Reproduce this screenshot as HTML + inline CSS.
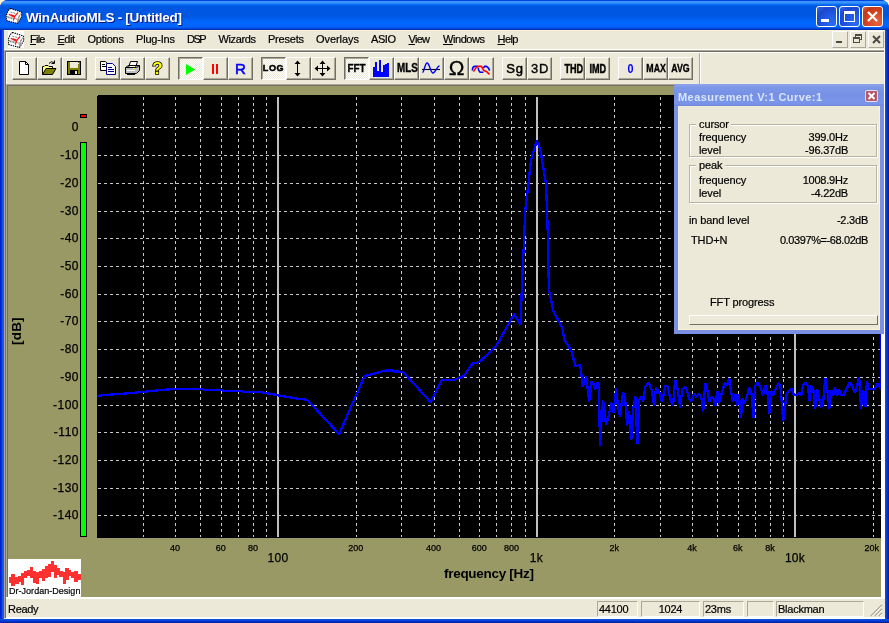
<!DOCTYPE html>
<html><head><meta charset="utf-8"><title>WinAudioMLS - [Untitled]</title>
<style>
html,body{margin:0;padding:0}
body{width:889px;height:623px;position:relative;overflow:hidden;background:#FBF3D3;font-family:"Liberation Sans",sans-serif;font-size:11px;color:#000}
.abs,.t{position:absolute}
.t{white-space:nowrap;line-height:1;transform-origin:0 0}
#win{will-change:transform;position:absolute;left:0;top:0;width:889px;height:623px;background:#0831D9;border-radius:8px 8px 0 0;overflow:hidden}
#title{position:absolute;left:0;top:0;width:889px;height:30px;background:linear-gradient(to bottom,#0045E0 0px,#0045E0 1px,#3A93FF 1.5px,#3A93FF 3px,#1078FB 4px,#0465EE 5px,#0058E2 6px,#0058E2 16px,#005CEB 18px,#0063F8 21px,#0066FF 23px,#0066FF 26px,#005CF0 27.5px,#0048D8 28.5px,#0030B5 29.5px,#0030B5 30px)}
#lb,#rb{position:absolute;top:30px;width:4px;height:593px}
#lb{left:0;background:linear-gradient(to right,#0019CF 0%,#0831D9 40%,#166AEE 75%,#0855DD 100%)}
#rb{left:885px;background:linear-gradient(to right,#0855DD 0%,#0A3FD8 30%,#001DA0 100%)}
#bb{position:absolute;left:0;top:619px;width:889px;height:4px;background:linear-gradient(to bottom,#0855DD 0%,#0A3FD8 40%,#001DA0 100%)}
#inner{position:absolute;left:4px;top:30px;width:881px;height:589px;background:#ECE9D8}
.tb{position:absolute;top:6px;width:21px;height:21px;border-radius:3px;box-sizing:border-box;border:1px solid #fff}
.tbb{background:radial-gradient(circle at 80% 85%,#2A6CF5 0%,#1E55E0 45%,#1B48CF 70%,#3468E6 100%)}
.tbc{background:radial-gradient(circle at 75% 80%,#E66540 0%,#D6431F 50%,#C03A18 75%,#E0694A 100%)}
.btn{position:absolute;top:57px;width:25px;height:23px;box-sizing:border-box;background:#ECE9D8;border-top:1px solid #fff;border-left:1px solid #fff;border-right:1px solid #716F64;border-bottom:1px solid #716F64;box-shadow:inset -1px -1px 0 #ACA899}
.btn.dn{border-top:1px solid #716F64;border-left:1px solid #716F64;border-right:1px solid #fff;border-bottom:1px solid #fff;box-shadow:inset 1px 1px 0 #ACA899;background:#ECE9D8 conic-gradient(#fff 25%,#ECE9D8 0 50%,#fff 0 75%,#ECE9D8 0) 0 0/2px 2px}
.btn svg{position:absolute;left:0;top:0}
.bt{position:absolute;left:0;top:0;width:23px;height:21px;text-align:center;line-height:21px;font-weight:bold;white-space:nowrap}
.mi,.mp,.sp{-webkit-text-stroke:0.2px #000}
.mi{position:absolute;top:33px;font-size:11px;line-height:13px;white-space:nowrap}
.mi u{text-decoration:underline;text-decoration-thickness:1px;text-underline-offset:1px}
.cb{position:absolute;top:31px;width:16px;height:17px;box-sizing:border-box;background:#ECE9D8;border-top:1px solid #fff;border-left:1px solid #fff;border-right:1px solid #ACA899;border-bottom:1px solid #ACA899}
.yl,.xs,.xb{-webkit-text-stroke:0.25px #000}
.yl{position:absolute;width:40px;text-align:right;font-size:12px;line-height:12px;letter-spacing:0.5px;white-space:nowrap}
.xs{position:absolute;width:40px;text-align:center;font-size:9px;line-height:10px;letter-spacing:0px;white-space:nowrap}
.xb{position:absolute;width:50px;text-align:center;font-size:12px;line-height:12px;letter-spacing:0.3px;white-space:nowrap}
.sp{position:absolute;top:601px;height:16px;box-sizing:border-box;border-top:1px solid #ACA899;border-left:1px solid #ACA899;border-right:1px solid #fff;border-bottom:1px solid #fff;font-size:11px;line-height:15px;white-space:nowrap;padding-left:1px;letter-spacing:-0.25px}
.mp{position:absolute;font-size:11px;line-height:11px;white-space:nowrap;letter-spacing:-0.12px}
.mr{letter-spacing:-0.22px}
.mr{text-align:right}
.gb{position:absolute;box-sizing:border-box;border:1px solid #B8B4A4;box-shadow:1px 1px 0 #fff,inset 1px 1px 0 #fff}
</style></head><body>
<div id="win">
<div id="title"></div><div id="lb"></div><div id="rb"></div><div id="bb"></div>
<div id="inner"></div><div class="abs" style="left:4px;top:30px;width:881px;height:1px;background:#FBF3D3"></div>

<svg class="abs" style="left:6px;top:8px" width="18" height="17" viewBox="0 0 18 17"><path d="M4.400 0.400 L15.500 4.100 L15.800 8.300 L11.500 15.500 L0.400 12.500 L0.300 7.300 L2.200 2.800 Z" fill="#fff" stroke="#000" stroke-width="1.1" stroke-dasharray="1.4 0.9"/><path d="M0.600 8.300 L11.300 11.300 L15.500 4.800 M11.300 11.300 L11.500 15" fill="none" stroke="#777" stroke-width=".7"/><path d="M4.400 4.100 L9.300 5.400 M1.500 9.600 L6.400 10.800 M13.300 7.500 L12.300 13" stroke="#666" stroke-width=".8" stroke-dasharray="2 1"/><path d="M2.800 6.400 L8.600 8.600 L7.300 12.500 M8.600 8.600 L12.100 4.300" fill="none" stroke="#FF1010" stroke-width="1.2"/><path d="M5 7.200 L8.600 8.600" stroke="#FF1010" stroke-width="1.8"/></svg>
<div class="t" id="ttl" style="left:26px;top:10.700px;font-size:13.5px;font-weight:bold;color:#fff;text-shadow:1px 1px 0 #0A1883;letter-spacing:-0.287px">WinAudioMLS - [Untitled]</div>
<div class="tb tbb" style="left:816px"><div class="abs" style="left:4px;top:12px;width:8px;height:3px;background:#fff"></div></div>
<div class="tb tbb" style="left:839px"><div class="abs" style="left:4px;top:4px;width:11px;height:11px;box-sizing:border-box;border:1px solid #fff;border-top:3px solid #fff"></div></div>
<div class="tb tbc" style="left:862px"><svg class="abs" style="left:3px;top:3px" width="13" height="13" viewBox="0 0 13 13"><path d="M2 2 L11 11 M11 2 L2 11" stroke="#fff" stroke-width="2.2"/></svg></div>
<div class="abs" style="left:8px;top:31px;width:16px;height:17px;background:#fff"></div>
<svg class="abs" style="left:8px;top:31.5px" width="18" height="17" viewBox="0 0 18 17"><path d="M4.400 0.400 L15.500 4.100 L15.800 8.300 L11.500 15.500 L0.400 12.500 L0.300 7.300 L2.200 2.800 Z" fill="#fff" stroke="#000" stroke-width="1.1" stroke-dasharray="1.4 0.9"/><path d="M0.600 8.300 L11.300 11.300 L15.500 4.800 M11.300 11.300 L11.500 15" fill="none" stroke="#777" stroke-width=".7"/><path d="M4.400 4.100 L9.300 5.400 M1.500 9.600 L6.400 10.800 M13.300 7.500 L12.300 13" stroke="#666" stroke-width=".8" stroke-dasharray="2 1"/><path d="M2.800 6.400 L8.600 8.600 L7.300 12.500 M8.600 8.600 L12.100 4.300" fill="none" stroke="#FF1010" stroke-width="1.2"/><path d="M5 7.200 L8.600 8.600" stroke="#FF1010" stroke-width="1.8"/></svg>
<div class="mi" id="m0" style="left:30px;letter-spacing:-0.750px"><u>F</u>ile</div>
<div class="mi" id="m1" style="left:57.5px;letter-spacing:-0.490px"><u>E</u>dit</div>
<div class="mi" id="m2" style="left:87.5px;letter-spacing:-0.237px">Options</div>
<div class="mi" id="m3" style="left:136px;letter-spacing:-0.194px">Plug-Ins</div>
<div class="mi" id="m4" style="left:187px;letter-spacing:-1.562px">DSP</div>
<div class="mi" id="m5" style="left:218.5px;letter-spacing:-0.372px">Wizards</div>
<div class="mi" id="m6" style="left:268px;letter-spacing:-0.216px">Presets</div>
<div class="mi" id="m7" style="left:316px;letter-spacing:-0.058px">Overlays</div>
<div class="mi" id="m8" style="left:371px;letter-spacing:-0.432px">ASIO</div>
<div class="mi" id="m9" style="left:408.5px;letter-spacing:-0.719px"><u>V</u>iew</div>
<div class="mi" id="m10" style="left:443px;letter-spacing:-0.440px"><u>W</u>indows</div>
<div class="mi" id="m11" style="left:497.5px;letter-spacing:-0.547px"><u>H</u>elp</div>
<div class="cb" style="left:832px"><div class="abs" style="left:3px;top:9px;width:6px;height:2px;background:#4D4B44"></div></div>
<div class="cb" style="left:850px"><div class="abs" style="left:4px;top:2px;width:7px;height:6px;box-sizing:border-box;border:1px solid #4D4B44;border-top:2px solid #4D4B44"></div><div class="abs" style="left:2px;top:5px;width:7px;height:6px;box-sizing:border-box;border:1px solid #4D4B44;border-top:2px solid #4D4B44;background:#ECE9D8"></div></div>
<div class="cb" style="left:868px"><svg class="abs" style="left:3px;top:3px" width="9" height="9" viewBox="0 0 9 9"><path d="M1 1 L8 8 M8 1 L1 8" stroke="#4D4B44" stroke-width="2"/></svg></div>
<div class="abs" style="left:4px;top:49px;width:881px;height:1px;background:#fff"></div>
<div class="abs" style="left:4px;top:50px;width:880px;height:1px;background:#ACA899"></div>
<div class="abs" style="left:5px;top:51px;width:879px;height:1px;background:#716F64"></div>
<div class="abs" style="left:6px;top:52px;width:878px;height:1px;background:#fff"></div>
<div class="abs" style="left:884px;top:50px;width:1px;height:569px;background:#fff"></div>
<div class="abs" style="left:4px;top:50px;width:1px;height:568px;background:#ACA899"></div>
<div class="abs" style="left:5px;top:51px;width:1px;height:567px;background:#716F64"></div>
<div class="abs" style="left:6px;top:52px;width:1px;height:33px;background:#fff"></div>
<div class="abs" style="left:699px;top:53px;width:1px;height:31px;background:#ACA899"></div>
<div class="abs" style="left:700px;top:53px;width:1px;height:31px;background:#fff"></div>
<div class="btn" style="left:12px"><svg width="23" height="21"><path d="M6.5 3.5 H12.5 L15.5 6.5 V16.5 H6.5 Z" fill="#fff" stroke="#000"/><path d="M12.5 3.5 V6.5 H15.5" fill="none" stroke="#000"/></svg></div>
<div class="btn" style="left:37px"><svg width="23" height="21"><path d="M4.5 16.5 V8.5 H6 L7 7.5 H10 L11 8.5 H14.5 V10.5" fill="#FFFF80" stroke="#000"/><path d="M4.5 16.5 L8 10.5 H18 L14.5 16.5 Z" fill="#808000" stroke="#000"/><path d="M11 5.5 Q13 2.5 16 4.5 M16.5 2.5 V5.5 H13.5" fill="none" stroke="#000"/></svg></div>
<div class="btn" style="left:62px"><svg width="23" height="21"><rect x="4.500" y="3.500" width="13" height="13" fill="#808000" stroke="#000"/><rect x="7" y="4" width="8" height="6" fill="#ECE9D8"/><rect x="7" y="12" width="8" height="4" fill="#000"/><rect x="12" y="13" width="2" height="3" fill="#ECE9D8"/><rect x="15" y="5" width="1" height="1" fill="#fff"/></svg></div>
<div class="btn" style="left:95px"><svg width="23" height="21"><path d="M4.500 3.500 H9.500 L11.500 5.500 V12.500 H4.500 Z" fill="#fff" stroke="#000"/><path d="M6 6.500 H9 M6 8.500 H10" stroke="#000"/><path d="M10.500 5.500 H16.500 L19.500 8.500 V16.500 H10.500 Z" fill="#fff" stroke="#000080"/><path d="M12 9.500 H16 M12 11.500 H18 M12 13.500 H18" stroke="#000080"/></svg></div>
<div class="btn" style="left:120px"><svg width="23" height="21"><path d="M7.500 9.500 L9.500 3.500 H16.500 L14.500 9.500" fill="#fff" stroke="#000"/><path d="M4.500 9.500 H15.500 L18.500 7.500 V12.500 L15.500 15.500 H4.500 Z" fill="#C0C0C0" stroke="#000"/><path d="M4.500 9.500 L7.500 7.500 H18.500" fill="none" stroke="#000"/><path d="M6 16.500 H14" stroke="#000"/><path d="M6 12.500 H14" stroke="#fff"/><rect x="12" y="10" width="2" height="1" fill="#FFFF00"/></svg></div>
<div class="btn" style="left:145px"><div class="bt" style="font-size:17px;color:#FFFF00;-webkit-text-stroke:1.6px #000;paint-order:stroke fill;line-height:21px">?</div></div>
<div class="btn dn" style="left:178px"><svg width="23" height="21"><path d="M7 6 L16.200 11.500 L7 17 Z" fill="#00FF00"/></svg></div>
<div class="btn" style="left:203px"><svg width="23" height="21"><rect x="8" y="6" width="2" height="10" fill="#FF0000"/><rect x="12" y="6" width="2" height="10" fill="#FF0000"/></svg></div>
<div class="btn" style="left:228px"><div class="bt" style="font-size:15px;color:#0000FF;font-weight:normal;-webkit-text-stroke:0.6px #0000FF">R</div></div>
<div class="btn dn" style="left:261px"><div class="bt" style="font-size:9px;letter-spacing:0.6px;-webkit-text-stroke:0.5px #000">LOG</div></div>
<div class="btn" style="left:286px"><svg width="23" height="21" shape-rendering="crispEdges"><rect x="10" y="4" width="1" height="13" fill="#000"/><path d="M10.500 2.500 L13.500 6 H7.500 Z M10.500 18.500 L13.500 15 H7.500 Z" fill="#000" shape-rendering="auto"/></svg></div>
<div class="btn" style="left:311px"><svg width="23" height="21" shape-rendering="crispEdges"><rect x="10" y="4" width="1" height="13" fill="#000"/><rect x="4" y="10" width="13" height="1" fill="#000"/><path d="M10.500 2.500 L13.500 6 H7.500 Z M10.500 18.500 L13.500 15 H7.500 Z M2.500 10.500 L6 7.500 V13.500 Z M18.500 10.500 L15 7.500 V13.500 Z" fill="#000" shape-rendering="auto"/></svg></div>
<div class="btn dn" style="left:344px"><div class="bt" style="font-size:11px;transform:scaleX(.9);-webkit-text-stroke:0.3px #000">FFT</div></div>
<div class="btn" style="left:369px"><svg width="23" height="21" shape-rendering="crispEdges"><path d="M3 18.500 V9 H5 V4 H7 V12.600 H9 V2 H11 V13.500 H13 V7.200 H15 V6 H17 V5 H19 V18.500 Z" fill="#0000FF"/></svg></div>
<div class="btn" style="left:394px"><div class="bt" style="font-size:12px;transform:scaleX(.82);-webkit-text-stroke:0.4px #000">MLS</div></div>
<div class="btn" style="left:419px"><svg width="23" height="21"><path d="M2 11.500 H20" stroke="#000" stroke-width="1.1"/><path d="M2.500 14.500 C4 14.500 5 5 7 5 C9.500 5 10.500 15 13 15 C15.500 15 16.500 9 19.500 7.700" fill="none" stroke="#0000FF" stroke-width="1.4"/></svg></div>
<div class="btn" style="left:444px"><div class="bt" style="font-size:21px;font-weight:normal;line-height:19px;-webkit-text-stroke:0.3px #000">Ω</div></div>
<div class="btn" style="left:469px"><svg width="23" height="21"><path d="M2.400 12.400 C2.400 10.500 3.300 8.400 5 8.400 H8" fill="none" stroke="#0000FF" stroke-width="1.6"/><path d="M8.200 9.700 L8.600 12.200 L10.100 14.300 H13.400" fill="none" stroke="#0000FF" stroke-width="1.5"/><path d="M13.400 10.100 L14.700 8.400 H16.400 L18.500 10.100 L19.700 12.600" fill="none" stroke="#0000FF" stroke-width="1.6"/><path d="M3.400 13.600 L6.300 9.300 L8.200 8.400 H11.400 L12.600 10.500 L13.900 12.600 L16.400 13.400 L19.500 16.400" fill="none" stroke="#FF0000" stroke-width="1.6"/></svg></div>
<div class="btn" style="left:502px"><div class="bt" style="font-size:13px;font-weight:normal;-webkit-text-stroke:0.5px #000;letter-spacing:0.8px;text-indent:1px">Sg</div></div>
<div class="btn" style="left:527px"><div class="bt" style="font-size:13px;font-weight:normal;-webkit-text-stroke:0.35px #000;letter-spacing:0.6px;text-indent:1px">3D</div></div>
<div class="btn" style="left:560px"><div class="bt" style="font-size:13px;transform:scaleX(.7);-webkit-text-stroke:0.5px #000">THD</div></div>
<div class="btn" style="left:585px"><div class="bt" style="font-size:13px;transform:scaleX(.7);-webkit-text-stroke:0.5px #000">IMD</div></div>
<div class="btn" style="left:618px"><div class="bt" style="font-size:13.5px;color:#0000FF;transform:scaleX(.8)">0</div></div>
<div class="btn" style="left:643px"><div class="bt" style="font-size:11px;transform:scaleX(.8);-webkit-text-stroke:0.35px #000">MAX</div></div>
<div class="btn" style="left:668px"><div class="bt" style="font-size:11px;transform:scaleX(.8);-webkit-text-stroke:0.35px #000">AVG</div></div>
<div class="abs" style="left:6px;top:84px;width:878px;height:1px;background:#ACA899"></div>
<div class="abs" style="left:6px;top:85px;width:875px;height:1px;background:#716F64"></div>
<div class="abs" style="left:6px;top:85px;width:1px;height:513px;background:#ACA899"></div>
<div class="abs" style="left:7px;top:85px;width:1px;height:513px;background:#716F64"></div>
<div class="abs" style="left:881px;top:85px;width:3px;height:513px;background:#fff"></div>
<div class="abs" id="olive" style="left:8px;top:86px;width:873px;height:511px;background:#999966"></div>
<svg class="abs" style="left:97px;top:95px" width="784" height="443" viewBox="97 95 784 443" shape-rendering="crispEdges">
<path d="M98 95 H881 V538 H97 V96 Z" fill="#000"/>
<path d="M98 127.5 H881" stroke="#C8C8C8" stroke-width="1" stroke-dasharray="3 3" fill="none"/>
<path d="M98 155.5 H881" stroke="#C8C8C8" stroke-width="1" stroke-dasharray="3 3" fill="none"/>
<path d="M98 183.5 H881" stroke="#C8C8C8" stroke-width="1" stroke-dasharray="3 3" fill="none"/>
<path d="M98 211.5 H881" stroke="#C8C8C8" stroke-width="1" stroke-dasharray="3 3" fill="none"/>
<path d="M98 238.5 H881" stroke="#C8C8C8" stroke-width="1" stroke-dasharray="3 3" fill="none"/>
<path d="M98 266.5 H881" stroke="#C8C8C8" stroke-width="1" stroke-dasharray="3 3" fill="none"/>
<path d="M98 294.5 H881" stroke="#C8C8C8" stroke-width="1" stroke-dasharray="3 3" fill="none"/>
<path d="M98 321.5 H881" stroke="#C8C8C8" stroke-width="1" stroke-dasharray="3 3" fill="none"/>
<path d="M98 349.5 H881" stroke="#C8C8C8" stroke-width="1" stroke-dasharray="3 3" fill="none"/>
<path d="M98 377.5 H881" stroke="#C8C8C8" stroke-width="1" stroke-dasharray="3 3" fill="none"/>
<path d="M98 405.5 H881" stroke="#C8C8C8" stroke-width="1" stroke-dasharray="3 3" fill="none"/>
<path d="M98 432.5 H881" stroke="#C8C8C8" stroke-width="1" stroke-dasharray="3 3" fill="none"/>
<path d="M98 460.5 H881" stroke="#C8C8C8" stroke-width="1" stroke-dasharray="3 3" fill="none"/>
<path d="M98 488.5 H881" stroke="#C8C8C8" stroke-width="1" stroke-dasharray="3 3" fill="none"/>
<path d="M98 515.5 H881" stroke="#C8C8C8" stroke-width="1" stroke-dasharray="3 3" fill="none"/>
<path d="M143.5 97 V537" stroke="#C8C8C8" stroke-width="1" stroke-dasharray="3 3" fill="none"/>
<path d="M175.5 97 V537" stroke="#C8C8C8" stroke-width="1" stroke-dasharray="3 3" fill="none"/>
<path d="M200.5 97 V537" stroke="#C8C8C8" stroke-width="1" stroke-dasharray="3 3" fill="none"/>
<path d="M221.5 97 V537" stroke="#C8C8C8" stroke-width="1" stroke-dasharray="3 3" fill="none"/>
<path d="M238.5 97 V537" stroke="#C8C8C8" stroke-width="1" stroke-dasharray="3 3" fill="none"/>
<path d="M253.5 97 V537" stroke="#C8C8C8" stroke-width="1" stroke-dasharray="3 3" fill="none"/>
<path d="M266.5 97 V537" stroke="#C8C8C8" stroke-width="1" stroke-dasharray="3 3" fill="none"/>
<path d="M356.5 97 V537" stroke="#C8C8C8" stroke-width="1" stroke-dasharray="3 3" fill="none"/>
<path d="M401.5 97 V537" stroke="#C8C8C8" stroke-width="1" stroke-dasharray="3 3" fill="none"/>
<path d="M434.5 97 V537" stroke="#C8C8C8" stroke-width="1" stroke-dasharray="3 3" fill="none"/>
<path d="M459.5 97 V537" stroke="#C8C8C8" stroke-width="1" stroke-dasharray="3 3" fill="none"/>
<path d="M479.5 97 V537" stroke="#C8C8C8" stroke-width="1" stroke-dasharray="3 3" fill="none"/>
<path d="M496.5 97 V537" stroke="#C8C8C8" stroke-width="1" stroke-dasharray="3 3" fill="none"/>
<path d="M511.5 97 V537" stroke="#C8C8C8" stroke-width="1" stroke-dasharray="3 3" fill="none"/>
<path d="M525.5 97 V537" stroke="#C8C8C8" stroke-width="1" stroke-dasharray="3 3" fill="none"/>
<path d="M614.5 97 V537" stroke="#C8C8C8" stroke-width="1" stroke-dasharray="3 3" fill="none"/>
<path d="M660.5 97 V537" stroke="#C8C8C8" stroke-width="1" stroke-dasharray="3 3" fill="none"/>
<path d="M692.5 97 V537" stroke="#C8C8C8" stroke-width="1" stroke-dasharray="3 3" fill="none"/>
<path d="M717.5 97 V537" stroke="#C8C8C8" stroke-width="1" stroke-dasharray="3 3" fill="none"/>
<path d="M738.5 97 V537" stroke="#C8C8C8" stroke-width="1" stroke-dasharray="3 3" fill="none"/>
<path d="M755.5 97 V537" stroke="#C8C8C8" stroke-width="1" stroke-dasharray="3 3" fill="none"/>
<path d="M770.5 97 V537" stroke="#C8C8C8" stroke-width="1" stroke-dasharray="3 3" fill="none"/>
<path d="M783.5 97 V537" stroke="#C8C8C8" stroke-width="1" stroke-dasharray="3 3" fill="none"/>
<path d="M873.5 97 V537" stroke="#C8C8C8" stroke-width="1" stroke-dasharray="3 3" fill="none"/>
<rect x="277" y="97" width="2" height="440" fill="#C0C0C0"/>
<rect x="536" y="97" width="2" height="440" fill="#C0C0C0"/>
<rect x="794" y="97" width="2" height="440" fill="#C0C0C0"/>
<path d="M97.0 395.8 L109.4 394.7 L119.5 394.0 L130.7 393.1 L142.0 392.0 L153.2 390.8 L163.4 389.9 L174.6 388.8 L202.7 388.8 L203.9 389.7 L221.9 389.9 L223.0 390.8 L242.1 391.1 L243.2 392.0 L261.2 392.2 L268.0 393.5 L278.1 395.3 L297.0 398.5 L307.1 399.8 L339.1 434.0 L364.5 376.2 L385.4 370.5 L392.8 370.5 L394.0 371.5 L403.0 371.8 L430.6 402.2 L442.1 379.7 L454.9 379.7 L463.7 375.9 L472.4 363.7 L479.2 362.1 L496.1 346.2 L514.3 313.9 L520.4 325.0 L521.3 303.0 L522.1 281.5 L523.0 260.0 L524.3 238.4 L525.0 213.0 L528.4 184.2 L531.0 160.1 L536.8 140.8 L538.7 144.4 L541.1 154.0 L546.0 184.2 L547.1 211.9 L547.9 237.2 L548.3 263.6 L549.0 290.2 L553.4 311.2 L562.2 328.0 L564.6 340.2 L571.2 350.6 L575.6 366.5 L579.5 364.7 L580.9 370.0 L582.7 386.8 L584.8 380.6 L586.2 376.2 L587.1 384.2 L589.2 401.8 L591.5 381.5 L593.3 383.3 L595.0 389.5 L597.7 382.4 L598.9 384.2 L600.0 446.0 L601.7 416.0 L603.0 400.0 L604.2 407.1 L606.0 424.8 L608.3 417.7 L611.3 402.7 L613.6 412.4 L616.2 388.6 L618.0 407.1 L620.1 416.9 L623.0 392.1 L625.1 398.3 L627.2 425.7 L629.0 410.7 L631.3 439.8 L633.0 410.7 L635.3 395.7 L637.4 444.2 L639.2 400.0 L641.3 396.5 L643.1 401.8 L645.4 386.8 L648.4 382.4 L651.6 389.5 L654.2 406.3 L656.0 387.7 L659.5 393.0 L662.0 402.0 L665.4 385.8 L667.4 385.8 L670.8 400.6 L673.1 405.3 L675.1 379.7 L676.9 385.1 L680.2 408.0 L682.3 389.1 L685.0 387.1 L687.0 390.5 L690.0 401.3 L691.7 400.6 L694.4 393.2 L696.2 397.2 L698.9 393.2 L701.2 396.6 L703.2 411.4 L705.2 383.1 L707.2 389.1 L709.3 402.0 L712.0 396.6 L714.0 399.3 L715.3 406.0 L717.4 391.2 L719.1 403.3 L721.4 394.5 L724.8 382.4 L727.1 385.8 L729.2 378.3 L730.9 390.5 L732.9 402.0 L735.6 394.5 L737.2 406.0 L738.9 394.5 L741.0 417.5 L742.6 397.9 L744.3 404.0 L747.0 396.6 L749.1 387.8 L751.5 393.2 L753.4 417.5 L755.1 385.8 L757.8 382.4 L759.9 385.8 L763.2 395.2 L765.3 385.1 L767.3 390.5 L769.3 413.4 L771.3 391.2 L773.1 395.9 L776.1 387.8 L778.8 383.0 L780.8 389.1 L783.2 421.4 L784.8 408.0 L786.8 393.1 L791.3 388.4 L793.6 394.5 L797.0 395.1 L799.9 392.5 L801.3 395.8 L803.0 385.0 L805.3 382.3 L808.0 386.4 L809.4 400.5 L811.1 385.7 L813.4 390.4 L815.1 409.3 L817.2 389.1 L819.2 398.5 L821.2 407.3 L823.2 401.2 L825.3 378.3 L827.3 389.1 L829.3 408.6 L831.3 389.8 L833.1 395.8 L835.0 387.1 L837.0 395.8 L839.0 389.1 L841.4 395.1 L843.5 395.1 L849.5 383.0 L851.5 385.0 L855.2 392.5 L859.2 377.6 L861.0 408.6 L863.0 389.8 L864.3 394.5 L865.4 406.6 L867.0 381.0 L868.4 388.5 L874.4 389.5 L877.3 383.5 L879.7 386.8 L881.1 390.0 L881.1 95.0" fill="none" stroke="#0000FF" stroke-width="2.3" stroke-linejoin="bevel" shape-rendering="crispEdges"/>
</svg>
<div class="yl" style="left:39px;top:121px">0</div>
<div class="yl" style="left:39px;top:149px">-10</div>
<div class="yl" style="left:39px;top:177px">-20</div>
<div class="yl" style="left:39px;top:205px">-30</div>
<div class="yl" style="left:39px;top:232px">-40</div>
<div class="yl" style="left:39px;top:260px">-50</div>
<div class="yl" style="left:39px;top:288px">-60</div>
<div class="yl" style="left:39px;top:315px">-70</div>
<div class="yl" style="left:39px;top:343px">-80</div>
<div class="yl" style="left:39px;top:371px">-90</div>
<div class="yl" style="left:39px;top:399px">-100</div>
<div class="yl" style="left:39px;top:426px">-110</div>
<div class="yl" style="left:39px;top:454px">-120</div>
<div class="yl" style="left:39px;top:482px">-130</div>
<div class="yl" style="left:39px;top:509px">-140</div>
<div class="t" id="dbl" style="left:10px;top:345px;font-size:13.5px;font-weight:bold;transform:rotate(-90deg);transform-origin:0 0;letter-spacing:0.2px">[dB]</div>
<div class="abs" style="left:80px;top:114px;width:7px;height:4px;box-sizing:border-box;border:1px solid #000;background:#FF0000"></div>
<div class="abs" style="left:80px;top:142px;width:7px;height:395px;box-sizing:border-box;border:1px solid #000;background:#00FF00"></div>
<div class="xs" style="left:155.1px;top:542.500px">40</div>
<div class="xs" style="left:200.7px;top:542.500px">60</div>
<div class="xs" style="left:232.9px;top:542.500px">80</div>
<div class="xs" style="left:335.8px;top:542.500px">200</div>
<div class="xs" style="left:413.6px;top:542.500px">400</div>
<div class="xs" style="left:459.2px;top:542.500px">600</div>
<div class="xs" style="left:491.4px;top:542.500px">800</div>
<div class="xs" style="left:594.3px;top:542.500px">2k</div>
<div class="xs" style="left:672.1px;top:542.500px">4k</div>
<div class="xs" style="left:717.7px;top:542.500px">6k</div>
<div class="xs" style="left:749.9px;top:542.500px">8k</div>
<div class="xs" style="left:851.8px;top:542.500px">20k</div>
<div class="xb" style="left:253.0px;top:552px">100</div>
<div class="xb" style="left:511.5px;top:552px">1k</div>
<div class="xb" style="left:770.0px;top:552px">10k</div>
<div class="t" id="fl" style="left:444px;top:567px;font-size:13.5px;font-weight:bold;letter-spacing:-0.290px">frequency [Hz]</div>
<div class="abs" style="left:8px;top:559px;width:73px;height:38px;background:#fff"></div>
<svg class="abs" style="left:0px;top:552px" width="90" height="50" shape-rendering="crispEdges"><rect x="9.2" y="24.6" width="2.2" height="6.6" fill="#FF3030"/><rect x="11.1" y="22.2" width="4.1" height="11.3" fill="#FF3030"/><rect x="14.9" y="25.0" width="3.6" height="6.6" fill="#FF3030"/><rect x="18.2" y="24.1" width="3.1" height="6.1" fill="#FF3030"/><rect x="21.0" y="21.3" width="3.1" height="11.3" fill="#FF3030"/><rect x="23.8" y="18.9" width="3.6" height="6.6" fill="#FF3030"/><rect x="27.2" y="17.5" width="3.1" height="6.1" fill="#FF3030"/><rect x="30.0" y="15.1" width="3.1" height="11.3" fill="#FF3030"/><rect x="32.8" y="19.4" width="3.1" height="11.8" fill="#FF3030"/><rect x="35.7" y="20.3" width="3.1" height="11.3" fill="#FF3030"/><rect x="38.5" y="18.9" width="3.6" height="6.6" fill="#FF3030"/><rect x="41.8" y="17.0" width="3.1" height="11.8" fill="#FF3030"/><rect x="44.6" y="14.2" width="3.6" height="11.8" fill="#FF3030"/><rect x="48.0" y="11.8" width="3.1" height="13.2" fill="#FF3030"/><rect x="50.8" y="9.0" width="3.1" height="11.3" fill="#FF3030"/><rect x="53.6" y="13.2" width="3.1" height="12.3" fill="#FF3030"/><rect x="56.5" y="16.1" width="3.1" height="6.6" fill="#FF3030"/><rect x="59.3" y="18.9" width="3.6" height="6.1" fill="#FF3030"/><rect x="62.6" y="20.3" width="3.1" height="11.3" fill="#FF3030"/><rect x="65.4" y="16.1" width="3.6" height="11.8" fill="#FF3030"/><rect x="68.7" y="18.4" width="2.7" height="5.7" fill="#FF3030"/><rect x="71.1" y="20.3" width="3.6" height="6.1" fill="#FF3030"/><rect x="74.4" y="18.9" width="3.1" height="11.3" fill="#FF3030"/><rect x="77.3" y="22.2" width="3.6" height="5.7" fill="#FF3030"/></svg>
<div class="t" id="djd" style="left:9px;top:587px;font-size:9px;-webkit-text-stroke:0.2px #000;letter-spacing:0.025px">Dr-Jordan-Design</div>
<div class="abs" style="left:6px;top:597px;width:878px;height:2px;background:#fff"></div>
<div class="abs" style="left:6px;top:599px;width:879px;height:20px;background:#ECE9D8"></div>
<div class="abs" style="left:6px;top:617px;width:879px;height:2px;background:#fff"></div>
<div class="t" style="left:8px;top:604px;font-size:11px;letter-spacing:-0.3px;-webkit-text-stroke:0.2px #000">Ready</div>
<div class="sp" style="left:597px;width:41px">44100</div>
<div class="sp" style="left:641px;width:59px;text-align:center;padding-left:0">1024</div>
<div class="sp" style="left:703px;width:41px">23ms</div>
<div class="sp" style="left:747px;width:27px"></div>
<div class="sp" style="left:776px;width:88px">Blackman</div>
<svg class="abs" style="left:868.500px;top:602.500px" width="14" height="14"><path d="M13 2 L2 13 M13 6 L6 13 M13 10 L10 13" stroke="#ACA899" stroke-width="1.6"/><path d="M13 3 L3 13 M13 7 L7 13 M13 11 L11 13" stroke="#fff" stroke-width="0.8"/></svg>
<div class="abs" id="mp" style="left:674px;top:84px;width:210px;height:250px;background:#7B90E3;border-radius:3px 3px 0 0"></div>
<div class="abs" style="left:674px;top:84px;width:210px;height:22px;border-radius:3px 3px 0 0;background:linear-gradient(to bottom,#8FA4EE 0%,#7E98E8 15%,#7590E4 50%,#7A96EA 85%,#7088DC 100%)"></div>
<div class="abs" style="left:678px;top:106px;width:202px;height:224px;background:#ECE9D8;box-shadow:inset -1px -1px 0 #FBF3D3"></div>
<div class="t" id="mt" style="left:678px;top:92px;font-size:11px;font-weight:bold;color:#D8E4F8;letter-spacing:0.432px">Measurement V:1 Curve:1</div>
<div class="abs" style="left:865px;top:90px;width:13px;height:12px;box-sizing:border-box;border:1px solid #E8E0F0;border-radius:2px;background:#B5576B"><svg class="abs" style="left:1px;top:1px" width="9" height="8"><path d="M1.500 1 L7.500 7 M7.500 1 L1.500 7" stroke="#fff" stroke-width="1.8"/></svg></div>
<div class="gb" style="left:689px;top:124px;width:188px;height:33px"></div>
<div class="abs" style="left:696px;top:120px;width:35px;height:10px;background:#ECE9D8"></div>
<div class="gb" style="left:689px;top:165px;width:188px;height:38px"></div>
<div class="abs" style="left:696px;top:161px;width:29px;height:10px;background:#ECE9D8"></div>
<div class="mp" style="left:699px;top:119px">cursor</div>
<div class="mp" style="left:699px;top:132px">frequency</div>
<div class="mp" style="left:699px;top:145px">level</div>
<div class="mp mr" style="left:728px;width:120px;top:132px">399.0Hz</div>
<div class="mp mr" style="left:728px;width:120px;top:145px">-96.37dB</div>
<div class="mp" style="left:699px;top:160px">peak</div>
<div class="mp" style="left:699px;top:175px">frequency</div>
<div class="mp" style="left:699px;top:188px">level</div>
<div class="mp mr" style="left:728px;width:120px;top:175px">1008.9Hz</div>
<div class="mp mr" style="left:728px;width:120px;top:188px">-4.22dB</div>
<div class="mp" style="left:689px;top:215px">in band level</div>
<div class="mp mr" style="left:748px;width:120px;top:215px">-2.3dB</div>
<div class="mp" style="left:691px;top:235px">THD+N</div>
<div class="mp mr" style="left:748px;width:120px;top:235px"><span style="letter-spacing:-0.4px">0.0397%=-68.02dB</span></div>
<div class="mp" style="left:710px;top:297px">FFT progress</div>
<div class="abs" style="left:689px;top:315px;width:189px;height:10px;box-sizing:border-box;border-top:1px solid #fff;border-left:1px solid #fff;border-right:1px solid #716F64;border-bottom:1px solid #716F64"></div>
</div></body></html>
